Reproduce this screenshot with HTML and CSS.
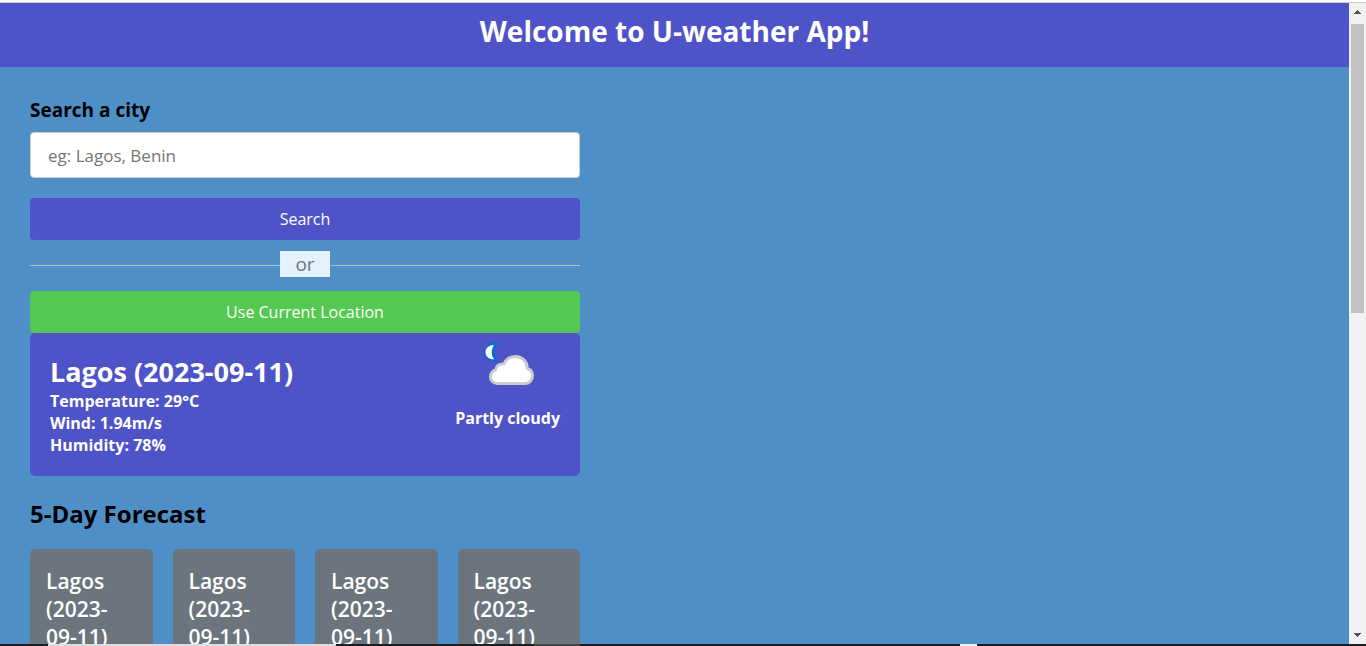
FILE: index.html
```html
<!DOCTYPE html>
<html lang="en">
<head>
<meta charset="utf-8">
<meta name="viewport" content="width=device-width, initial-scale=1">
<title>U-weather App</title>
<link rel="stylesheet" href="styles.css">
</head>
<body>
<div class="window">
  <div class="window-edge"></div>
  <div class="viewport">
    <div class="page">
      <header class="header"><h1 class="title">Welcome to U-weather App!</h1></header>
      <main class="container">
        <form class="search">
          <label class="search-label" for="city">Search a city</label>
          <input class="city-input" id="city" type="text" placeholder="eg: Lagos, Benin">
          <button class="btn search-btn" type="button">Search</button>
          <div class="separator"><span class="separator-text">or</span></div>
          <button class="btn location-btn" type="button">Use Current Location</button>
        </form>
        <section class="current">
          <div class="details">
            <h2 class="city">Lagos (2023-09-11)</h2>
            <p class="reading">Temperature: 29°C</p>
            <p class="reading">Wind: 1.94m/s</p>
            <p class="reading">Humidity: 78%</p>
          </div>
          <div class="condition">
            <svg class="weather-icon" viewBox="0 0 64 64" aria-hidden="true">
              <path d="M23 10.500 C20.500 8.600 15.500 8.700 12 11.500 C7 15.500 7 22.500 11 26 C14.500 29.300 19.500 29.500 23 28.200 C17.500 25.500 17 14 23 10.500Z" fill="#0a6bd0"/>
              <path d="M18 12 C13 12 9.500 15 9.500 19 C9.500 23.500 13 26.500 18 26.300 C15 22.500 15 16.500 18 12Z" fill="#fff"/>
              <path d="M21.500 50.500 C17 50.500 14.500 47.500 14.500 44 C14.500 40 17 37.500 19.500 37 C20 33 23.500 30.500 28 31 C29.500 26.500 34 23.500 39.500 23.500 C46 23.500 51.500 28.500 51.200 35.500 C54.500 36.500 56.500 39.500 56.500 42.500 C56.500 47.500 53 50.500 49 50.500Z" fill="#fff" stroke="#ccc" stroke-width="3" stroke-linejoin="round"/>
            </svg>
            <p class="reading">Partly cloudy</p>
          </div>
        </section>
        <section class="forecast">
          <h2 class="forecast-title">5-Day Forecast</h2>
          <ul class="cards">
            <li class="card"><h3 class="card-title">Lagos (2023-09-11)</h3></li>
            <li class="card"><h3 class="card-title">Lagos (2023-09-11)</h3></li>
            <li class="card"><h3 class="card-title">Lagos (2023-09-11)</h3></li>
            <li class="card"><h3 class="card-title">Lagos (2023-09-11)</h3></li>
          </ul>
        </section>
      </main>
    </div>
    <div class="scrollbar" aria-hidden="true">
      <svg class="arrow" viewBox="0 0 17 17" shape-rendering="crispEdges"><path d="M8 7h1v1h1v1h1v1h1v1H5v-1h1V9h1V8h1z" fill="#505050"/></svg>
      <div class="track"><div class="thumb"></div></div>
      <svg class="arrow" viewBox="0 0 17 17" shape-rendering="crispEdges"><path d="M5 6h7v1h-1v1h-1v1H9v1H8V9H7V8H6V7H5z" fill="#505050"/></svg>
    </div>
  </div>
  <div class="taskbar"><div class="task-search"></div><div class="task-active"></div><div class="task-tray"></div></div>
</div>
</body>
</html>
```
FILE: styles.css
```css
* { box-sizing: border-box; margin: 0; padding: 0; font-family: "Open Sans", sans-serif; }
.window { display: flex; flex-direction: column; height: 100vh; overflow: hidden; }
.window-edge { flex: none; height: 3px; background: #fff; border-bottom: 1px solid #ccc; }
.viewport { flex: 1; min-height: 0; display: flex; }
.page { flex: 1; overflow: hidden; background: #4e8fc7; }
.header { background: #4e53c8; color: #fff; text-align: center; padding: 8px 0 16px; }
.title { font-size: 28px; line-height: 40px; font-weight: 700; }
.container { max-width: 610px; padding: 30px; }
.search { display: flex; flex-direction: column; }
.search-label { font-size: 19px; line-height: 27px; font-weight: 700; color: #000; }
.city-input { width: 100%; height: 46px; margin: 8px 0 20px; padding: 0 17px; border: 1px solid #ccc; border-radius: 4px; background: #fff; font-size: 17px; }
.city-input::placeholder { color: #757575; }
.btn { width: 100%; border: none; border-radius: 4px; color: #fff; font-size: 16px; line-height: 22px; padding: 10px 0; cursor: pointer; }
.search-btn { background: #4e53c8; }
.location-btn { background: #54c850; }
.separator { display: grid; grid-template-columns: 1fr 50px 1fr; margin: 11px 0 14px; }
.separator::before, .separator::after { content: ""; height: 1px; margin-top: 14px; background: #bbb; }
.separator-text { background: #e3f2fd; color: #6c757d; text-align: center; font-size: 19px; line-height: 26px; }
.current { display: flex; justify-content: space-between; padding: 20px; border-radius: 5px; background: #4e53c8; color: #fff; }
.city { font-size: 27px; line-height: 37px; font-weight: 700; }
.reading { font-size: 16px; line-height: 22px; font-weight: 700; }
.condition { display: flex; flex-direction: column; align-items: center; margin-top: -20px; }
.weather-icon { width: 64px; height: 64px; margin-bottom: 10px; }
.forecast-title { margin: 20px 0 18px; font-size: 24px; line-height: 35px; font-weight: 700; color: #000; }
.cards { display: grid; grid-template-columns: repeat(4, 1fr); gap: 20px; list-style: none; }
.card { padding: 18px 16px; border-radius: 5px; background: #6c757d; color: #fff; }
.card-title { font-size: 21px; line-height: 28px; font-weight: 600; }
.scrollbar { flex: none; width: 17px; display: flex; flex-direction: column; background: #f1f1f1; }
.arrow { flex: none; width: 17px; height: 17px; }
.track { flex: 1; padding: 4px 2px 0; }
.thumb { height: 48%; background: #c1c1c1; }
.taskbar { flex: none; display: flex; height: 2px; background: #1b1d22; }
.task-search { width: 288px; margin-left: 48px; background: #ddd; }
.task-active { width: 46px; margin-left: 198px; background: #444; }
.task-tray { width: 17px; margin-left: 380px; background: #eee; }
```
